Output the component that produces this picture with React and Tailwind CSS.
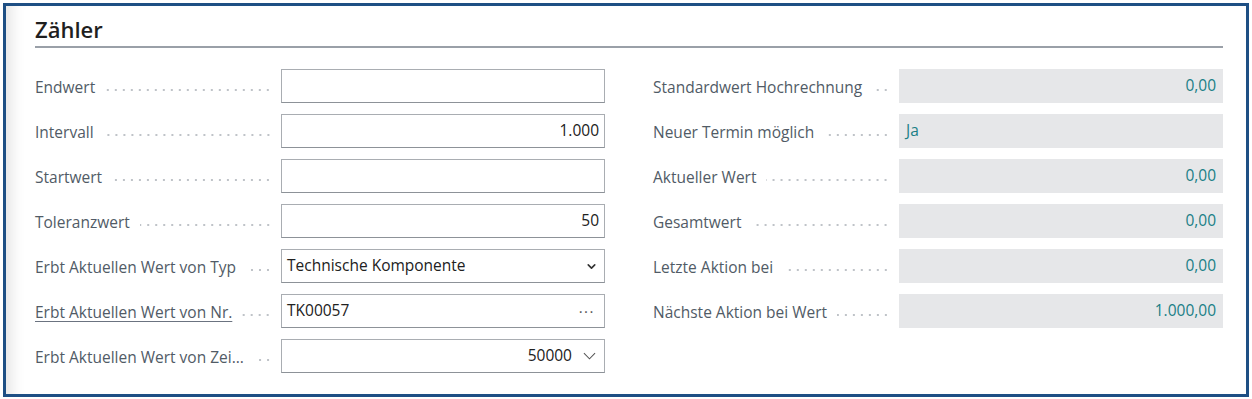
import { ChevronDown } from "lucide-react";

const leftRows = [
  { label: "Endwert", kind: "input", value: "" },
  { label: "Intervall", kind: "input", value: "1.000", align: "right" },
  { label: "Startwert", kind: "input", value: "" },
  { label: "Toleranzwert", kind: "input", value: "50", align: "right" },
  { label: "Erbt Aktuellen Wert von Typ", kind: "select", value: "Technische Komponente" },
  { label: "Erbt Aktuellen Wert von Nr.", kind: "lookup", value: "TK00057", link: true },
  { label: "Erbt Aktuellen Wert von Zei...", kind: "combo", value: "50000" },
];

const rightRows = [
  { label: "Standardwert Hochrechnung", value: "0,00", align: "right" },
  { label: "Neuer Termin möglich", value: "Ja" },
  { label: "Aktueller Wert", value: "0,00", align: "right" },
  { label: "Gesamtwert", value: "0,00", align: "right" },
  { label: "Letzte Aktion bei", value: "0,00", align: "right" },
  { label: "Nächste Aktion bei Wert", value: "1.000,00", align: "right" },
];

function Label({ text, link }) {
  return (
    <div className="flex h-full w-[246px] shrink-0 items-center pr-[9px] pt-[4px]">
      <span className={`whitespace-nowrap text-[15.5px] text-[#515b66] ${link ? "underline underline-offset-[3px] decoration-[#6b7380]" : ""}`}>
        {text}
      </span>
      <span className="ml-[10px] mt-[3px] h-[4px] flex-1 bg-[radial-gradient(circle,#bfc3c8_0.9px,transparent_1.3px)] bg-[length:8px_4px] bg-[position:right_center] bg-repeat-x" />
    </div>
  );
}

function Field({ row }) {
  const base = "flex h-full flex-1 items-center border border-[#a9adb2] border-b-[#8d9298] bg-white px-[5px] text-[15.5px] text-[#212121]";
  if (row.kind === "select") {
    return (
      <div className={`${base} justify-between`}>
        <span>{row.value}</span>
        <ChevronDown className="mr-[1px] h-[13px] w-[13px] text-[#333]" strokeWidth={3} />
      </div>
    );
  }
  if (row.kind === "lookup") {
    return (
      <div className={`${base} justify-between`}>
        <span>{row.value}</span>
        <span className="mr-[4px] text-[15px] tracking-[1.5px] text-[#555]">···</span>
      </div>
    );
  }
  if (row.kind === "combo") {
    return (
      <div className={`${base} justify-end`}>
        <span>{row.value}</span>
        <svg viewBox="0 0 14 8" className="ml-[11px] mr-[3px] h-[8px] w-[13px]" fill="none" stroke="#555" strokeWidth="1.1">
          <path d="M1 1l6 6 6-6" />
        </svg>
      </div>
    );
  }
  return (
    <div className={`${base} ${row.align === "right" ? "justify-end" : ""}`}>
      <span>{row.value}</span>
    </div>
  );
}

export default function App() {
  return (
    <div className="h-[399px] w-[1252px] bg-white pl-[3px] pt-[3px] font-['Open_Sans',sans-serif]">
      <div className="h-[394px] w-[1246px] border-[3px] border-[#1e4f84] bg-white pl-[29px] pr-[23px] pt-[9px] shadow-[inset_16px_0_14px_-10px_rgba(0,0,0,0.1)]">
        <h2 className="h-[28px] text-[22px] font-semibold leading-[28px] text-[#1f1f1f]">Zähler</h2>
        <div className="mt-[3px] h-[2px] bg-[#9aa0a8]" />
        <div className="mt-[21px] grid grid-cols-2 gap-x-[48px]">
          <div className="flex flex-col gap-[11px]">
            {leftRows.map((row) => (
              <div key={row.label} className="flex h-[34px]">
                <Label text={row.label} link={row.link} />
                <Field row={row} />
              </div>
            ))}
          </div>
          <div className="flex flex-col gap-[11px]">
            {rightRows.map((row) => (
              <div key={row.label} className="flex h-[34px]">
                <Label text={row.label} />
                <div className={`flex h-full flex-1 items-center bg-[#e6e7e9] px-[7px] text-[15.5px] text-[#1a7f86] ${row.align === "right" ? "justify-end" : ""}`}>
                  {row.value}
                </div>
              </div>
            ))}
          </div>
        </div>
      </div>
    </div>
  );
}
